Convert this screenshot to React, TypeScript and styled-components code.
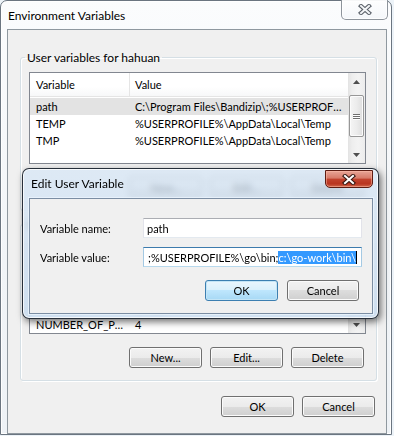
import styled, { createGlobalStyle } from 'styled-components';

const GlobalStyle = createGlobalStyle`
  html, body {
    margin: 0;
    padding: 0;
    background: #edf3f8;
  }
  body {
    font-family: Lato, "Noto Sans", sans-serif;
    font-size: 11px;
    color: #000;
    overflow: hidden;
  }
`;

const Desktop = styled.div`
  position: relative;
  width: 394px;
  height: 436px;
  overflow: hidden;
`;

const Window = styled.div`
  box-sizing: border-box;
  width: 392px;
  border: 1px solid #6b7580;
  border-radius: 7px 7px 0 0;
  padding: 0 4px 0 6px;
  background: linear-gradient(180deg, #fbfcfd 0%, #f1f4f7 60%, #eef2f6 100%);
  box-shadow: inset 0 0 0 1px rgba(255, 255, 255, 0.9);
`;

const TitleBar = styled.div<{ $h: number }>`
  height: ${(p) => p.$h}px;
  display: flex;
  justify-content: space-between;
  align-items: flex-start;
`;

const TitleText = styled.div<{ $pad: number }>`
  align-self: center;
  padding-left: ${(p) => p.$pad}px;
  font-size: 12px;
`;

const CloseBtn = styled.div<{ $active?: boolean }>`
  box-sizing: border-box;
  width: ${(p) => (p.$active ? 48 : 47)}px;
  height: ${(p) => (p.$active ? 18 : 20)}px;
  margin-top: ${(p) => (p.$active ? 1 : -1)}px;
  margin-right: ${(p) => (p.$active ? 0 : -1)}px;
  border: 1px solid ${(p) => (p.$active ? '#5e1c12' : '#8d949b')};
  border-top: ${(p) => (p.$active ? '' : 'none')};
  border-radius: 0 0 5px 5px;
  display: flex;
  align-items: center;
  justify-content: center;
  background: ${(p) =>
    p.$active
      ? 'linear-gradient(180deg, #e8a597 0%, #d77a68 45%, #c2432e 50%, #b93520 80%, #d0674c 100%)'
      : 'linear-gradient(180deg, rgba(255,255,255,0.7) 0%, rgba(240,244,248,0.6) 100%)'};
  box-shadow: inset 0 0 0 1px ${(p) => (p.$active ? 'rgba(255,190,170,0.5)' : 'rgba(255,255,255,0.8)')};
`;

const Client = styled.div`
  box-sizing: border-box;
  width: 380px;
  border: 1px solid #8f989f;
  background: #f0f0f0;
  padding: 20px 9px 16px 12px;
`;

const Group = styled.fieldset<{ $gap?: number }>`
  margin: ${(p) => p.$gap ?? 0}px 0 0 0;
  min-width: 0;
  padding: 7px 10px 12px 8px;
  border: 1px solid #d5dfe5;
  border-radius: 3px;
  box-shadow: inset 1px 1px 0 #fff, 1px 1px 0 #fff;
`;

const Legend = styled.legend`
  margin-left: -4px;
  padding: 0 2px;
  line-height: 15px;
  font-size: 12px;
`;

const ListView = styled.div<{ $h: number }>`
  box-sizing: border-box;
  height: ${(p) => p.$h}px;
  border: 1px solid #828790;
  background: #fff;
  display: flex;
`;

const ListBody = styled.div`
  flex: 1;
  min-width: 0;
  display: flex;
  flex-direction: column;
  overflow: hidden;
`;

const Header = styled.div`
  flex: none;
  height: 23px;
  display: flex;
  border-bottom: 1px solid #e5e5e5;
  background: linear-gradient(180deg, #fff 0%, #fff 60%, #f7f8f9 100%);
`;

const HeadCell = styled.div<{ $w?: number }>`
  box-sizing: border-box;
  ${(p) => (p.$w ? `width: ${p.$w}px; border-right: 1px solid #e5e5e5;` : 'flex: 1;')}
  padding-left: ${(p) => (p.$w ? 6 : 5)}px;
  display: flex;
  align-items: center;
`;

const Rows = styled.div<{ $bottom?: boolean }>`
  flex: 1;
  min-height: 0;
  padding-top: 1px;
  display: flex;
  flex-direction: column;
  justify-content: ${(p) => (p.$bottom ? 'flex-end' : 'flex-start')};
  overflow: hidden;
`;

const Row = styled.div<{ $sel?: boolean }>`
  flex: none;
  height: 17px;
  display: flex;
  align-items: center;
  background: ${(p) => (p.$sel ? '#e3e3e3' : 'transparent')};
`;

const Cell = styled.div<{ $w?: number }>`
  box-sizing: border-box;
  ${(p) => (p.$w ? `width: ${p.$w}px; flex: none;` : 'flex: 1; min-width: 0;')}
  padding: 0 4px 0 ${(p) => (p.$w ? 6 : 5)}px;
  white-space: nowrap;
  overflow: hidden;
  text-overflow: ellipsis;
`;

const ScrollBar = styled.div`
  flex: none;
  width: 17px;
  display: flex;
  flex-direction: column;
  background: linear-gradient(90deg, #e3e3e3 0%, #eeeeee 25%, #f3f3f3 60%, #ececec 100%);
`;

const Arrow = styled.div`
  flex: none;
  height: 17px;
  display: flex;
  align-items: center;
  justify-content: center;
`;

const Track = styled.div<{ $grow: number }>`
  flex: ${(p) => p.$grow};
  min-height: 0;
`;

const Thumb = styled.div<{ $h: number }>`
  box-sizing: border-box;
  flex: none;
  height: ${(p) => p.$h}px;
  margin: 0 1px;
  border: 1px solid #979797;
  border-radius: 2px;
  background: linear-gradient(90deg, #f5f5f5 0%, #ececec 50%, #dedede 100%);
  box-shadow: inset 0 0 0 1px #fbfbfb;
  display: flex;
  flex-direction: column;
  align-items: center;
  justify-content: center;
  gap: 1px;
`;

const Grip = styled.div`
  width: 7px;
  height: 1px;
  background: #6f6f6f;
  box-shadow: 0 1px 0 #fff;
`;

const ButtonRow = styled.div<{ $top: number; $right: number; $gap: number }>`
  display: flex;
  justify-content: flex-end;
  gap: ${(p) => p.$gap}px;
  margin-top: ${(p) => p.$top}px;
  padding-right: ${(p) => p.$right}px;
`;

const Button = styled.div<{ $def?: boolean; $w?: number }>`
  box-sizing: border-box;
  width: ${(p) => p.$w ?? 73}px;
  height: 21px;
  border: 1px solid ${(p) => (p.$def ? '#3c7fb1' : '#707070')};
  border-radius: 3px;
  display: flex;
  align-items: center;
  justify-content: center;
  background: ${(p) =>
    p.$def
      ? 'linear-gradient(180deg, #eaf6fd 0%, #d9f0fc 50%, #bee6fd 50%, #a7d9f5 100%)'
      : 'linear-gradient(180deg, #f2f2f2 0%, #ebebeb 50%, #dddddd 50%, #cfcfcf 100%)'};
  box-shadow: inset 0 0 0 1px ${(p) => (p.$def ? '#c4e5f6' : '#fbfbfb')};
`;

const Dialog = styled.div`
  position: absolute;
  left: 22px;
  top: 168px;
  box-sizing: border-box;
  width: 357px;
  height: 151px;
  padding: 0 5px 4px 6px;
  border: 1px solid rgba(20, 28, 38, 0.9);
  border-radius: 7px;
  background: linear-gradient(180deg, rgba(214, 230, 246, 0.72) 0%, rgba(196, 218, 240, 0.75) 100%);
  backdrop-filter: blur(3px);
  box-shadow: 2px 3px 7px rgba(0, 0, 0, 0.55), inset 0 0 0 1px rgba(255, 255, 255, 0.75);
`;

const DialogClient = styled.div`
  box-sizing: border-box;
  border: 1px solid #7c8ea3;
  background: #f0f0f0;
  padding: 19px 10px 12px 10px;
  box-shadow: 0 0 0 1px rgba(235, 244, 252, 0.8);
`;

const Form = styled.div`
  display: grid;
  grid-template-columns: 103px 1fr;
  grid-auto-rows: 20px;
  row-gap: 9px;
  align-items: center;
`;

const Field = styled.div<{ $focus?: boolean }>`
  box-sizing: border-box;
  height: 20px;
  border: 1px solid;
  border-color: ${(p) =>
    p.$focus ? '#3d7bad #a4c9e3 #b7d9ed #a4c9e3' : '#abadb3 #e2e3ea #e3e9ef #e2e3ea'};
  background: #fff;
  display: flex;
  align-items: center;
  justify-content: ${(p) => (p.$focus ? 'flex-end' : 'flex-start')};
  padding: 0 4px 0 3px;
  white-space: nowrap;
  overflow: hidden;
`;

const Selected = styled.span`
  background: #3399ff;
  color: #fff;
  border-right: 1px solid #000;
`;

const XIcon = ({ light }: { light?: boolean }) => (
  <svg width="14" height="11" viewBox="0 0 14 11">
    <g strokeLinecap="square">
      <path d="M3 2 L11 9 M11 2 L3 9" stroke={light ? '#3b1a14' : '#5a6068'} strokeWidth="4.2" />
      <path d="M3 2 L11 9 M11 2 L3 9" stroke={light ? '#ffffff' : '#f3f5f7'} strokeWidth="2" />
    </g>
  </svg>
);

const ArrowIcon = ({ down }: { down?: boolean }) => (
  <svg width="7" height="4" viewBox="0 0 7 4">
    <polygon points={down ? '0,0 7,0 3.5,4' : '0,4 7,4 3.5,0'} fill="#4f4f4f" />
  </svg>
);

type Item = { name: string; value: string; sel?: boolean };

const userVars: Item[] = [
  { name: 'path', value: 'C:\\Program Files\\Bandizip\\;%USERPROFILE%\\go\\bin;c:\\go-work\\bin\\', sel: true },
  { name: 'TEMP', value: '%USERPROFILE%\\AppData\\Local\\Temp' },
  { name: 'TMP', value: '%USERPROFILE%\\AppData\\Local\\Temp' },
];

const sysVars: Item[] = [
  { name: 'ComSpec', value: 'C:\\Windows\\system32\\cmd.exe' },
  { name: 'FP_NO_HOST_CHECK', value: 'NO' },
  { name: 'GOROOT', value: 'C:\\Go\\' },
  { name: 'NUMBER_OF_PROCESSORS', value: '4' },
];

function VarList({ items, height, bottom, thumbTop, thumbH }: {
  items: Item[];
  height: number;
  bottom?: boolean;
  thumbTop: number;
  thumbH: number;
}) {
  return (
    <ListView $h={height}>
      <ListBody>
        <Header>
          <HeadCell $w={100}>Variable</HeadCell>
          <HeadCell>Value</HeadCell>
        </Header>
        <Rows $bottom={bottom}>
          {items.map((it) => (
            <Row key={it.name} $sel={it.sel}>
              <Cell $w={100}>{it.name}</Cell>
              <Cell>{it.value}</Cell>
            </Row>
          ))}
        </Rows>
      </ListBody>
      <ScrollBar>
        <Arrow>
          <ArrowIcon />
        </Arrow>
        <Track $grow={thumbTop} />
        <Thumb $h={thumbH}>
          <Grip />
          <Grip />
          <Grip />
        </Thumb>
        <Track $grow={100 - thumbTop} />
        <Arrow>
          <ArrowIcon down />
        </Arrow>
      </ScrollBar>
    </ListView>
  );
}

export default function App() {
  return (
    <Desktop>
      <GlobalStyle />
      <Window>
        <TitleBar $h={28}>
          <TitleText $pad={1}>Environment Variables</TitleText>
          <CloseBtn>
            <XIcon />
          </CloseBtn>
        </TitleBar>
        <Client>
          <Group>
            <Legend>User variables for hahuan</Legend>
            <VarList items={userVars} height={92} thumbTop={37} thumbH={42} />
            <ButtonRow $top={13} $right={2} $gap={8}>
              <Button>New...</Button>
              <Button>Edit...</Button>
              <Button>Delete</Button>
            </ButtonRow>
          </Group>
          <Group $gap={6}>
            <Legend>System variables</Legend>
            <VarList items={sysVars} height={95} bottom thumbTop={60} thumbH={30} />
            <ButtonRow $top={13} $right={2} $gap={8}>
              <Button>New...</Button>
              <Button>Edit...</Button>
              <Button>Delete</Button>
            </ButtonRow>
          </Group>
          <ButtonRow $top={15} $right={2} $gap={8}>
            <Button>OK</Button>
            <Button>Cancel</Button>
          </ButtonRow>
        </Client>
      </Window>

      <Dialog>
        <TitleBar $h={29}>
          <TitleText $pad={2}>Edit User Variable</TitleText>
          <CloseBtn $active>
            <XIcon light />
          </CloseBtn>
        </TitleBar>
        <DialogClient>
          <Form>
            <div>Variable name:</div>
            <Field>path</Field>
            <div>Variable value:</div>
            <Field $focus>
              ;%USERPROFILE%\go\bin;<Selected>c:\go-work\bin\</Selected>
            </Field>
          </Form>
          <ButtonRow $top={13} $right={3} $gap={9}>
            <Button $def>OK</Button>
            <Button $w={72}>Cancel</Button>
          </ButtonRow>
        </DialogClient>
      </Dialog>
    </Desktop>
  );
}
